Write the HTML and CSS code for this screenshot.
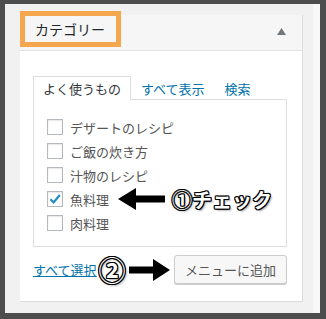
FILE: index.html
```html
<!DOCTYPE html>
<html>
<head>
    <title>カテゴリー</title>
    <link rel="stylesheet" href="styles.css">
</head>
<body>
<div class="frame">
    <div class="section">
        <div class="sec-head">
            <h3 class="sec-title">カテゴリー</h3>
            <svg class="toggle" width="9" height="7" viewBox="0 0 9 7"><polygon points="4.5,0 9,7 0,7" fill="#72777c"/></svg>
        </div>
        <div class="sec-body">
            <ul class="tabs">
                <li class="tab active">よく使うもの</li>
                <li class="tab"><a href="#">すべて表示</a></li>
                <li class="tab"><a href="#">検索</a></li>
            </ul>
            <div class="tab-panel">
                <ul class="checklist">
                    <li class="row"><span class="box"></span><span class="label">デザートのレシピ</span></li>
                    <li class="row"><span class="box"></span><span class="label">ご飯の炊き方</span></li>
                    <li class="row"><span class="box"></span><span class="label">汁物のレシピ</span></li>
                    <li class="row">
                        <span class="box checked">
                            <svg width="14" height="14" viewBox="0 0 14 14"><path d="M2.5 7.2 L5.6 10.4 L11.8 3" fill="none" stroke="#1e8cbe" stroke-width="2.2"/></svg>
                        </span>
                        <span class="label">魚料理</span>
                        <svg class="arrow-left" width="47" height="24" viewBox="0 0 47 24"><polygon points="0,12 18,1 18,8.5 47,8.5 47,15.5 18,15.5 18,23" fill="#000"/></svg>
                        <span class="note">①チェック</span>
                    </li>
                    <li class="row"><span class="box"></span><span class="label">肉料理</span></li>
                </ul>
            </div>
            <div class="actions">
                <a class="select-all" href="#">すべて選択</a>
                <span class="note num">②</span>
                <svg class="arrow-right" width="41" height="24" viewBox="0 0 41 24"><polygon points="41,12 24,1 24,8.5 0,8.5 0,15.5 24,15.5 24,23" fill="#000"/></svg>
                <button class="add-btn">メニューに追加</button>
            </div>
        </div>
    </div>
</div>
</body>
</html>
```

FILE: styles.css
```css
html, body {
    margin: 0;
    padding: 0;
}
body {
    font-family: "Noto Sans CJK JP", "Noto Sans", sans-serif;
    background: #4d4d4d;
}
.frame {
    width: 326px;
    height: 319px;
    box-sizing: border-box;
    border-style: solid;
    border-color: #4d4d4d;
    border-width: 4px 6px 6px 5px;
    background: linear-gradient(to right, #f1f1f1 0, #f1f1f1 308px, #f8f8f8 308px);
    padding: 11px 0 0 15px;
}
.section {
    width: 283px;
    box-sizing: border-box;
    background: #fff;
    border-right: 1px solid #dddddd;
    border-bottom: 1px solid #dddddd;
}
.sec-head {
    height: 35px;
    background: #f6f6f6;
    border-bottom: 1px solid #e3e3e3;
    display: flex;
    align-items: flex-start;
    justify-content: space-between;
}
.sec-title {
    margin: -4px 0 0 0;
    height: 36px;
    box-sizing: border-box;
    border: 5px solid #f4a74f;
    padding: 0 11px 0 10px;
    font-size: 14px;
    font-weight: normal;
    line-height: 26px;
    color: #23282d;
}
.toggle {
    margin: 13px 16px 0 0;
}
.sec-body {
    padding: 25px 15px 17px 13px;
}
.tabs {
    display: flex;
    margin: 0;
    padding: 0;
    list-style: none;
}
.tab {
    height: 24px;
    box-sizing: border-box;
    padding: 0 9px;
    font-size: 13px;
    line-height: 23px;
    margin-bottom: -1px;
    border: 1px solid transparent;
    border-bottom: none;
}
.tab.active {
    border-color: #dddddd;
    background: #fff;
    color: #32373c;
    position: relative;
}
.tab a {
    color: #0073aa;
    text-decoration: none;
}
.tab-panel {
    border: 1px solid #dddddd;
    padding: 15px 13px 11px;
}
.checklist {
    margin: 0;
    padding: 0;
    list-style: none;
}
.row {
    height: 24px;
    display: flex;
    align-items: center;
}
.box {
    width: 16px;
    height: 16px;
    box-sizing: border-box;
    border: 1px solid #b4b9be;
    background: #fff;
    box-shadow: inset 0 1px 2px rgba(0, 0, 0, 0.1);
    margin-right: 7px;
    display: flex;
    align-items: center;
    justify-content: center;
}
.label {
    font-size: 13px;
    color: #555;
}
.arrow-left {
    margin-left: 9px;
}
.note {
    font-size: 20px;
    font-weight: 700;
    color: #fff;
    text-shadow: 1px 0 #000, -1px 0 #000, 0 1px #000, 0 -1px #000,
        1px 1px #000, -1px -1px #000, 1px -1px #000, -1px 1px #000,
        2px 2px 2px rgba(0, 0, 0, 0.35);
}
.row .note {
    margin-left: 7px;
}
.actions {
    margin-top: 8px;
    height: 29px;
    display: flex;
    align-items: center;
}
.select-all {
    font-size: 13px;
    color: #0073aa;
    text-decoration: underline;
}
.num {
    font-size: 27px;
    margin-left: 2px;
    line-height: 29px;
}
.arrow-right {
    margin-left: 3px;
}
.add-btn {
    margin-left: auto;
    width: 113px;
    height: 29px;
    padding: 0;
    font-family: "Noto Sans CJK JP", "Noto Sans", sans-serif;
    font-size: 13px;
    color: #555;
    background: #f7f7f7;
    border: 1px solid #cccccc;
    border-radius: 3px;
    box-shadow: 0 1px 0 #cccccc;
}
```
